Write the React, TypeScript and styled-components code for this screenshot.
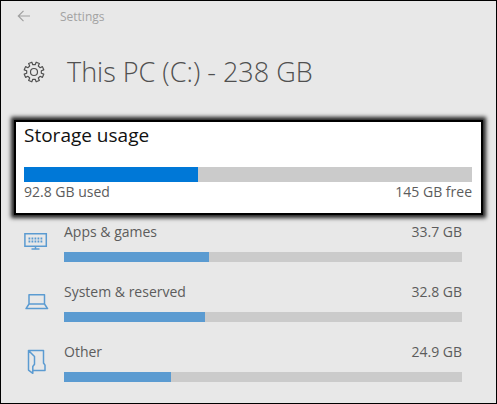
import React from "react";
import styled, { createGlobalStyle } from "styled-components";

const GlobalStyle = createGlobalStyle`
  * { box-sizing: border-box; }
  body {
    margin: 0;
    background: #e8e8e8;
    color: #5c5c5c;
    font-family: "Open Sans", "Noto Sans", sans-serif;
  }
  h1, h2, ul { margin: 0; padding: 0; font-weight: 400; }
`;

const Window = styled.main`
  min-height: 100vh;
  border: 1px solid #000;
  background: #e8e8e8;
`;

const TitleBar = styled.header`
  display: flex;
  align-items: center;
  gap: 29px;
  height: 30px;
  padding-left: 16px;
  font-size: 12px;
  color: #a3a3a3;
`;

const BackButton = styled.button`
  display: flex;
  padding: 0;
  border: 0;
  background: none;
  color: #a0a0a0;
`;

const Heading = styled.div`
  display: flex;
  align-items: center;
  gap: 22px;
  height: 82px;
  padding-left: 22px;
  color: #505050;
`;

const Title = styled.h1`
  font-size: 27px;
  line-height: 36px;
  font-weight: 300;
  white-space: nowrap;
`;

const UsageCard = styled.section`
  margin: 7px 13px 0;
  padding: 0 9px 11px 8px;
  border: 2px solid #000;
  background: #fff;
  box-shadow: 0 0 4px 3px #222;
`;

const CardTitle = styled.h2`
  margin-bottom: 19px;
  font-size: 19px;
  line-height: 26px;
  color: #111;
`;

const Labels = styled.div`
  display: flex;
  justify-content: space-between;
  font-size: 14px;
  line-height: 20px;
`;

const Track = styled.div<{ $height: number }>`
  height: ${(p) => p.$height}px;
  background: #cbcbcb;
`;

const Fill = styled.div<{ $color: string }>`
  height: 100%;
  background: ${(p) => p.$color};
`;

const CategoryList = styled.ul`
  list-style: none;
  padding: 7px 34px 0 23px;
`;

const Category = styled.li`
  display: grid;
  grid-template-columns: 40px 1fr;
  height: 60px;
`;

const IconCell = styled.div`
  display: flex;
  align-items: center;
  height: 40px;
`;

const CategoryBody = styled.div`
  display: flex;
  flex-direction: column;
  gap: 10px;
`;

function Meter({ label, percent, height, color }: { label: string; percent: number; height: number; color: string }) {
  return (
    <Track $height={height} role="progressbar" aria-label={label} aria-valuenow={percent} aria-valuemin={0} aria-valuemax={100}>
      <Fill $color={color} style={{ width: `${percent}%` }} />
    </Track>
  );
}

const BackIcon = () => (
  <svg width="14" height="14" viewBox="0 0 14 14" fill="none" stroke="currentColor" strokeWidth="1.2">
    <path d="M13 7H1.5M6.5 1.8L1.3 7l5.2 5.2" />
  </svg>
);

const gearPath = (() => {
  const points: string[] = [];
  for (let i = 0; i < 8; i++) {
    const center = i * 45 + 22.5;
    const corners: [number, number][] = [[-13, 7.4], [-10, 10], [10, 10], [13, 7.4]];
    corners.forEach(([offset, radius]) => {
      const angle = ((center + offset) * Math.PI) / 180;
      points.push(`${(11 + radius * Math.cos(angle)).toFixed(2)} ${(11 + radius * Math.sin(angle)).toFixed(2)}`);
    });
  }
  return `M${points.join("L")}Z`;
})();

const GearIcon = () => (
  <svg width="22" height="22" viewBox="0 0 22 22" fill="none" stroke="currentColor" strokeWidth="1.2" strokeLinejoin="round">
    <path d={gearPath} />
    <circle cx="11" cy="11" r="3.5" />
  </svg>
);

const MonitorIcon = () => (
  <svg width="24" height="18" viewBox="0 2 24 18" fill="none" stroke="#5b9bd1" strokeWidth="1.5">
    <path d="M.9 2.8h21.4v12.4H.9zM11.5 15.200v2.600M7.500 18h8" />
    <path d="M4.500 7.500h14M4.500 10.500h14" strokeWidth="1.8" strokeDasharray="1.800 1.200" />
  </svg>
);

const LaptopIcon = () => (
  <svg width="26" height="18" viewBox="0 2 26 18" fill="none" stroke="#5b9bd1" strokeWidth="1.5" strokeLinejoin="round">
    <path d="M5 13V3.800h15.500V13zM5 13l-3 4.600h21.600L20.500 13" />
  </svg>
);

const FolderIcon = () => (
  <svg width="24" height="26" viewBox="0 0 24 26" fill="none" stroke="#5b9bd1" strokeWidth="1.5" strokeLinejoin="round">
    <path d="M4.500 1.500H19.500v12.500l1.500 2.200v5.300H8.800M4.500 1.500v19.600l4.300 3.200V17.500l1.700-2.300V7.500z" />
  </svg>
);

const categories = [
  { name: "Apps & games", size: "33.7 GB", percent: 36.4, Icon: MonitorIcon },
  { name: "System & reserved", size: "32.8 GB", percent: 35.4, Icon: LaptopIcon },
  { name: "Other", size: "24.9 GB", percent: 27, Icon: FolderIcon },
];

export default function App() {
  return (
    <>
      <GlobalStyle />
      <Window>
        <TitleBar>
          <BackButton aria-label="Back"><BackIcon /></BackButton>
          <span>Settings</span>
        </TitleBar>
        <Heading>
          <GearIcon />
          <Title>This PC (C:) - 238 GB</Title>
        </Heading>
        <UsageCard>
          <CardTitle>Storage usage</CardTitle>
          <Meter label="Storage usage" percent={38.9} height={15} color="#0078d7" />
          <Labels>
            <span>92.8 GB used</span>
            <span>145 GB free</span>
          </Labels>
        </UsageCard>
        <CategoryList>
          {categories.map(({ name, size, percent, Icon }) => (
            <Category key={name}>
              <IconCell><Icon /></IconCell>
              <CategoryBody>
                <Labels>
                  <span>{name}</span>
                  <span>{size}</span>
                </Labels>
                <Meter label={name} percent={percent} height={10} color="#5b9bd1" />
              </CategoryBody>
            </Category>
          ))}
        </CategoryList>
      </Window>
    </>
  );
}
